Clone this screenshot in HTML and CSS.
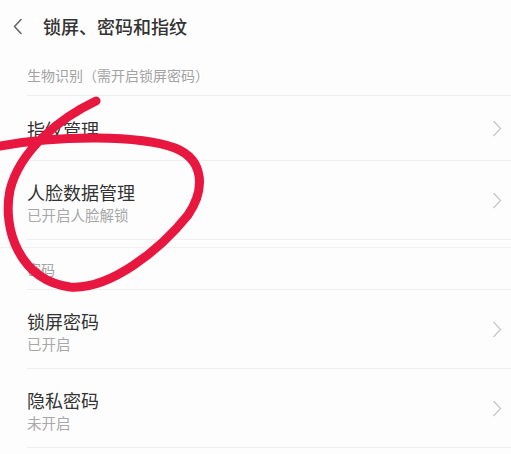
FILE: index.html
```html
<!DOCTYPE html>
<html lang="zh">
<head>
<meta charset="utf-8">
<title>锁屏、密码和指纹</title>
<link rel="stylesheet" href="styles.css">
</head>
<body>
<div class="page">
  <header class="topbar">
    <svg class="back" width="11" height="17" viewBox="0 0 11 17"><path d="M9 1.5 L2.5 8.5 L9 15.5" fill="none" stroke="#666" stroke-width="1.6" stroke-linecap="round" stroke-linejoin="round"/></svg>
    <h1 class="title">锁屏、密码和指纹</h1>
  </header>

  <div class="section-label first">生物识别（需开启锁屏密码）</div>
  <div class="row row-single">
    <div class="row-text"><div class="row-title">指纹管理</div></div>
    <svg class="chev" width="10" height="17" viewBox="0 0 10 17"><path d="M1.5 1 L8.5 8.5 L1.5 16" fill="none" stroke="#cacaca" stroke-width="1.4"/></svg>
  </div>
  <div class="row row-double">
    <div class="row-text"><div class="row-title">人脸数据管理</div><div class="row-sub">已开启人脸解锁</div></div>
    <svg class="chev" width="10" height="17" viewBox="0 0 10 17"><path d="M1.5 1 L8.5 8.5 L1.5 16" fill="none" stroke="#cacaca" stroke-width="1.4"/></svg>
  </div>
  <div class="spacer"></div>

  <div class="section-label">密码</div>
  <div class="row row-double">
    <div class="row-text"><div class="row-title">锁屏密码</div><div class="row-sub">已开启</div></div>
    <svg class="chev" width="10" height="17" viewBox="0 0 10 17"><path d="M1.5 1 L8.5 8.5 L1.5 16" fill="none" stroke="#cacaca" stroke-width="1.4"/></svg>
  </div>
  <div class="row row-double">
    <div class="row-text"><div class="row-title">隐私密码</div><div class="row-sub">未开启</div></div>
    <svg class="chev" width="10" height="17" viewBox="0 0 10 17"><path d="M1.5 1 L8.5 8.5 L1.5 16" fill="none" stroke="#cacaca" stroke-width="1.4"/></svg>
  </div>

  <svg class="annotation" width="511" height="454" viewBox="0 0 511 454">
    <path d="M96,101 C60,118 20,150 10,190 C2,230 20,280 70,287 C110,290 160,250 188,215 C205,190 205,160 175,148 C140,135 60,135 0,146" fill="none" stroke="#e8173f" stroke-width="9" stroke-linecap="round" stroke-linejoin="round"/>
  </svg>
</div>
</body>
</html>
```

FILE: styles.css
```css
html, body {
  margin: 0;
  padding: 0;
  background: #fdfdfd;
}
body {
  font-family: "Noto Sans CJK SC", "Noto Sans", sans-serif;
  color: #333;
}
.page {
  position: relative;
  width: 511px;
  height: 454px;
  overflow: hidden;
  display: flex;
  flex-direction: column;
}
.topbar {
  height: 54px;
  flex: none;
  display: flex;
  align-items: center;
  padding-left: 12px;
  gap: 20px;
  box-sizing: border-box;
}
.back {
  display: block;
  margin-top: -2px;
}
.title {
  margin: 0;
  font-size: 18px;
  font-weight: 500;
  line-height: 24px;
  color: #333;
  margin-top: -2px;
}
.section-label {
  height: 42px;
  flex: none;
  margin-left: 27px;
  box-sizing: border-box;
  display: flex;
  align-items: flex-end;
  padding-bottom: 10px;
  font-size: 14px;
  line-height: 20px;
  color: #a3a3a3;
  border-bottom: 1px solid #efefef;
}
.row {
  flex: none;
  margin-left: 27px;
  padding-right: 9px;
  box-sizing: border-box;
  display: flex;
  align-items: center;
  justify-content: space-between;
  border-bottom: 1px solid #efefef;
}
.row-single {
  height: 65px;
}
.row-double {
  height: 79px;
  align-items: flex-start;
  padding-top: 18px;
}
.row-double .chev {
  align-self: center;
  margin-top: -18px;
}
.row-title {
  font-size: 18px;
  line-height: 26px;
  color: #333;
}
.row-single .row-title {
  margin-top: 2px;
}
.row-sub {
  font-size: 14.5px;
  line-height: 20px;
  color: #a8a8a8;
}
.chev {
  display: block;
  flex: none;
}
.spacer {
  height: 8px;
  flex: none;
  border-bottom: 1px solid #f0f0f0;
  box-sizing: border-box;
}
.annotation {
  position: absolute;
  left: 0;
  top: 0;
  pointer-events: none;
}
```
